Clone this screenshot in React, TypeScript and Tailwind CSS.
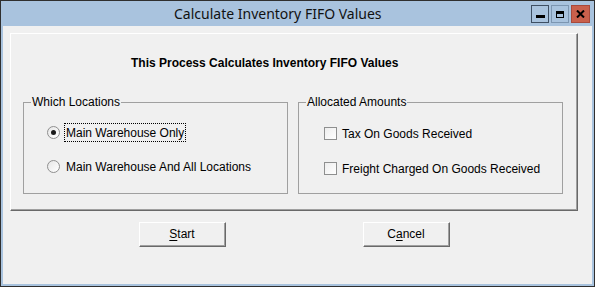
import React from "react";

function Radio({ checked }: { checked?: boolean }) {
  return (
    <div className="w-[13px] h-[13px] rounded-full border border-[#8f8f8f] bg-gradient-to-br from-[#e6e6e6] to-[#ffffff] flex items-center justify-center shrink-0">
      {checked && <div className="w-[5px] h-[5px] rounded-full bg-[#1a1a1a]" />}
    </div>
  );
}

function Check() {
  return (
    <div className="w-[13px] h-[13px] border border-[#8e8f8f] bg-gradient-to-br from-[#ededed] to-[#ffffff] shrink-0" />
  );
}

function Btn({ children }: { children: React.ReactNode }) {
  return (
    <div className="w-[87px] h-[25px] border-t border-l border-white border-r border-b border-r-[#696969] border-b-[#696969]">
      <div className="w-full h-full border-r border-b border-[#a0a0a0] flex items-center justify-center text-[12px] leading-[14px] text-black">
        {children}
      </div>
    </div>
  );
}

export default function App() {
  return (
    <div className="w-[595px] h-[287px] border border-[#2f2f2f] bg-[#a9c3de] flex flex-col px-[2px] pb-[2px] font-['Liberation_Sans',Arial,sans-serif]">
      {/* title bar */}
      <div className="h-[25px] flex shrink-0">
        <div className="pl-[171px] flex items-center text-[14px] text-[#111] font-['Noto_Sans',sans-serif] pb-[1px]">
          Calculate Inventory FIFO Values
        </div>
        <div className="ml-auto flex gap-[2px] pt-[4px] pr-[2px]">
          <div className="w-[18px] h-[18px] border border-[#3e4f63] flex items-center justify-center">
            <div className="w-[9px] h-[3px] bg-black mt-[4px]" />
          </div>
          <div className="w-[18px] h-[18px] border border-[#7d96b1] flex items-center justify-center">
            <div className="w-[8px] h-[7px] border border-black border-t-[3px]" />
          </div>
          <div className="w-[19px] h-[18px] border border-[#a8493b] bg-[#c9604c] flex items-center justify-center">
            <svg width="9" height="8" viewBox="0 0 9 8">
              <path d="M1 0.5 L8 7.5 M8 0.5 L1 7.5" stroke="#000" strokeWidth="2" />
            </svg>
          </div>
        </div>
      </div>

      {/* client */}
      <div className="flex-1 bg-[#f0f0f0] flex flex-col">
        <div className="mt-[7px] ml-[7px] w-[568px] h-[178px] border-t border-l border-white border-r border-b border-r-[#696969] border-b-[#696969]">
          <div className="w-full h-full border-r border-b border-[#a0a0a0] flex flex-col">
            <div className="mt-[22px] pl-[120px] text-[12px] leading-[14px] font-bold text-black">
              This Process Calculates Inventory FIFO Values
            </div>
            <div className="mt-[32px] pl-[12px] flex gap-[10px]">
              <div className="relative w-[265px] h-[92px] border border-[#a0a0a0]">
                <span className="absolute -top-[8px] left-[7px] px-[1px] bg-[#f0f0f0] text-[12px] leading-[14px] text-black">
                  Which Locations
                </span>
                <div className="pt-[20px] pl-[23px] flex flex-col gap-[15px] text-[12px] leading-[14px] text-black">
                  <div className="flex items-center h-[19px]">
                    <Radio checked />
                    <div className="ml-[4px] h-[19px] px-[1px] border border-dotted border-black flex items-center">
                      Main Warehouse Only
                    </div>
                  </div>
                  <div className="flex items-center h-[19px]">
                    <Radio />
                    <div className="ml-[4px] h-[19px] px-[1px] border border-transparent flex items-center">
                      Main Warehouse And All Locations
                    </div>
                  </div>
                </div>
              </div>
              <div className="relative w-[265px] h-[92px] border border-[#a0a0a0]">
                <span className="absolute -top-[8px] left-[7px] px-[1px] bg-[#f0f0f0] text-[12px] leading-[14px] text-black">
                  Allocated Amounts
                </span>
                <div className="pt-[21px] pl-[25px] flex flex-col gap-[16px] text-[12px] leading-[14px] text-black">
                  <div className="flex items-center h-[19px]">
                    <Check />
                    <span className="ml-[5px]">Tax On Goods Received</span>
                  </div>
                  <div className="flex items-center h-[19px]">
                    <Check />
                    <span className="ml-[5px]">Freight Charged On Goods Received</span>
                  </div>
                </div>
              </div>
            </div>
          </div>
        </div>

        <div className="mt-[11px] pl-[136px] flex gap-[137px]">
          <Btn>
            <span>
              <span className="underline underline-offset-2">S</span>tart
            </span>
          </Btn>
          <Btn>
            <span>
              C<span className="underline underline-offset-2">a</span>ncel
            </span>
          </Btn>
        </div>
      </div>
    </div>
  );
}
